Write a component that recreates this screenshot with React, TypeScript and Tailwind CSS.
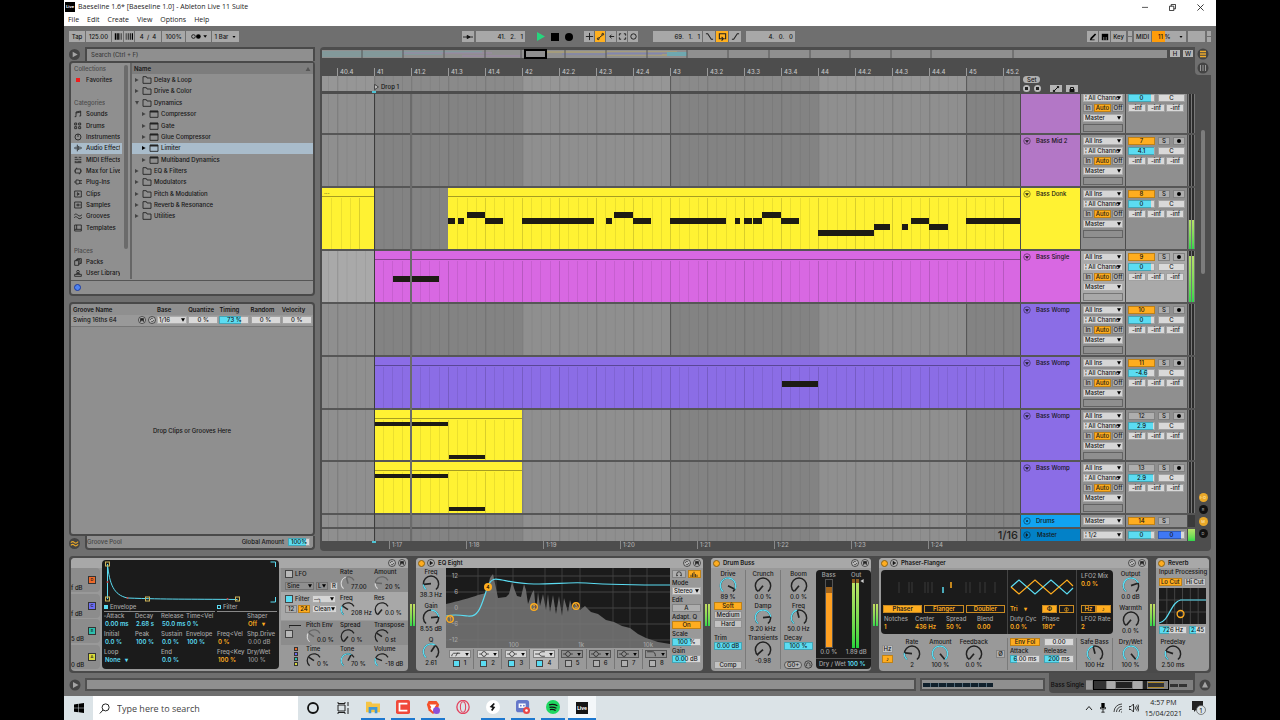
import type { ReactNode } from "react";
import clsx from "clsx";

const BAR = 37;
const LANE_W = 698;
const pct = (x: number) => `${(x / LANE_W) * 100}%`;

type Note = [x: number, w: number, y: number, h?: number];
type Clip = { x: number; w: number; color: string; label?: string; notes?: Note[] };
type Track = {
  name: string;
  num: string;
  vol: string;
  fill: number;
  height: string;
  color: string;
  on?: boolean;
  selected?: boolean;
  clipped?: boolean;
  meter?: number;
  clips?: Clip[];
};

const yellow = "bg-[#fff233]";
const womp: Clip = { x: 52, w: 148, color: yellow, notes: [[0, 74, 12, 4], [75, 36, 45, 4]] };

const tracks: Track[] = [
  { name: "", num: "6", vol: "0", fill: 85, height: "h-[41px]", color: "bg-[#b377c6]", clipped: true },
  { name: "Bass Mid 2", num: "7", vol: "4.1", fill: 96, height: "h-[53px]", color: "bg-[#b377c6]", on: true },
  {
    name: "Bass Donk", num: "8", vol: "0", fill: 85, height: "h-[63px]", color: yellow, on: true, meter: 48,
    clips: [
      { x: 0, w: 52, color: yellow, label: "..." },
      {
        x: 126, w: 572, color: yellow,
        notes: [
          [0, 7, 30], [10, 6, 30], [19, 18, 24], [37, 18, 30], [74, 72, 30], [158, 6, 30], [166, 19, 24], [185, 18, 30],
          [222, 56, 30], [287, 5, 30], [296, 8, 30], [305, 9, 30], [314, 19, 24], [333, 18, 30], [370, 56, 42],
          [426, 16, 36], [454, 6, 36], [463, 18, 30], [481, 19, 36], [518, 54, 30],
        ],
      },
    ],
  },
  {
    name: "Bass Single", num: "9", vol: "0", fill: 85, height: "h-[53px]", color: "bg-[#d868e2]", on: true, selected: true, meter: 90,
    clips: [{ x: 52, w: 646, color: "bg-[#d868e2]", notes: [[19, 46, 25]] }],
  },
  { name: "Bass Womp", num: "10", vol: "0", fill: 85, height: "h-[53px]", color: "bg-[#8b6de6]", on: true },
  {
    name: "Bass Womp", num: "11", vol: "-4.6", fill: 72, height: "h-[53px]", color: "bg-[#8b6de6]", on: true,
    clips: [{ x: 52, w: 646, color: "bg-[#8b6de6]", notes: [[408, 36, 24]] }],
  },
  { name: "Bass Womp", num: "12", vol: "2.9", fill: 94, height: "h-[52px]", color: "bg-[#8b6de6]", clips: [womp] },
  { name: "Bass Womp", num: "13", vol: "2.9", fill: 94, height: "h-[53px]", color: "bg-[#8b6de6]", clips: [womp] },
];

/* ---------- shared controls ---------- */

function Select({ label, value, className, tone = "bg-[#d6d6d6]" }: { label: string; value: string; className?: string; tone?: string }) {
  return (
    <span className={clsx("relative flex h-2 min-w-0 shrink-0", className)}>
      <select aria-label={label} className={clsx("h-2 w-full min-w-0 appearance-none overflow-hidden pl-0.5 pr-1 leading-[8px] ring-1 ring-inset ring-black/20", tone)}>
        <option>{value}</option>
      </select>
      <svg viewBox="0 0 6 5" className="pointer-events-none absolute right-0.5 top-0.5 h-1 w-1"><path d="M0 0h6L3 5z" /></svg>
    </span>
  );
}

function Num({ label, value, fill = 0, color = "#5bdcf2", base = "#d9d9d9", className }: { label: string; value: string; fill?: number; color?: string; base?: string; className?: string }) {
  return (
    <input
      aria-label={label}
      defaultValue={value}
      size={1}
      className={clsx("h-2 min-w-0 shrink-0 p-0 text-center leading-[8px] ring-1 ring-inset ring-black/25", className)}
      style={{ background: `linear-gradient(to right, ${color} ${fill}%, ${base} ${fill}%)` }}
    />
  );
}

function Btn({ children, on, label, className }: { children?: ReactNode; on?: boolean; label?: string; className?: string }) {
  return (
    <button aria-label={label} className={clsx("flex h-2 shrink-0 items-center justify-center leading-[8px] whitespace-nowrap ring-1 ring-inset ring-black/25", on ? "bg-[#ffad1f]" : "bg-[#aeaeae]", className)}>
      {children}
    </button>
  );
}

const pt = (v: number, r: number) => {
  const a = ((-140 + 280 * v) * Math.PI) / 180;
  return `${(10 + r * Math.sin(a)).toFixed(2)} ${(10 - r * Math.cos(a)).toFixed(2)}`;
};
const arc = (a: number, b: number) => `M${pt(a, 8.5)}A8.5 8.5 0 ${(b - a) * 280 > 180 ? 1 : 0} 1 ${pt(b, 8.5)}`;

function Dial({ v, from = 0, end = 1, color = "#5bdcf2", ink = "#222", className = "h-4 w-[18px]" }: { v: number; from?: number; end?: number; color?: string; ink?: string; className?: string }) {
  const lo = Math.min(v, from);
  const hi = Math.max(v, from);
  return (
    <svg viewBox="0 .5 20 17.500" fill="none" strokeWidth="1.600" className={clsx("shrink-0", className)}>
      <path d={arc(0, end)} stroke={ink} />
      {hi > lo && <path d={arc(lo, hi)} stroke={color} />}
      <path d={`M10 10L${pt(v, 8)}`} stroke={ink} strokeWidth="1.900" />
    </svg>
  );
}

function Knob({ label, value, ...dial }: { label: string; value: string; v: number; from?: number }) {
  return (
    <div className="flex h-8 shrink-0 flex-col items-center whitespace-nowrap leading-[7px]">
      <span>{label}</span>
      <Dial {...dial} />
      <span>{value}</span>
    </div>
  );
}

function SideKnob({ label, value, dim, ...dial }: { label: string; value: string; v: number; from?: number; dim?: boolean }) {
  return (
    <div className="flex w-[34px] shrink-0 flex-col whitespace-nowrap leading-[8px]">
      <span>{label}</span>
      <span className="flex items-end">
        <Dial {...dial} end={0.72} className="h-3.5 w-4" ink={dim ? "#666" : "#222"} color={dim ? "#d5d5d5" : undefined} />
        <span className="-ml-[5px] leading-[6px]">{value}</span>
      </span>
    </div>
  );
}

function RoundIcon({ children, className }: { children: ReactNode; className?: string }) {
  return (
    <svg viewBox="0 0 16 16" fill="none" stroke="#222" strokeWidth="1.400" className={clsx("size-2", className)}>
      <circle cx="8" cy="8" r="7" fill="#b8b8b8" />
      {children}
    </svg>
  );
}

const HotSwap = () => <RoundIcon><path d="M4.500 8a3.500 3.500 0 0 1 5-3M11.500 8a3.500 3.500 0 0 1-5 3" /></RoundIcon>;
const Save = () => <RoundIcon><path d="M5 5h6v6H5z" fill="#222" /><path d="M6.500 9.500h3v2h-3z" fill="#ddd" stroke="none" /></RoundIcon>;

/* ---------- window top ---------- */

function TitleBar() {
  return (
    <header className="bg-white text-[#222] font-['Open_Sans',sans-serif] font-normal">
      <div className="flex h-3.5 items-center pl-px">
        <span className="flex h-2.5 w-2.5 items-center justify-center bg-black text-[4px] font-bold text-white">Live</span>
        <h1 className="ml-[3px] text-[7px] leading-[14px]">Baeseline 1.6* [Baeseline 1.0] - Ableton Live 11 Suite</h1>
        <div className="ml-auto flex gap-[21px] pr-3">
          <button aria-label="Minimize"><svg viewBox="0 0 8 8" className="size-1.5" stroke="#222" strokeWidth="1"><path d="M0 4.500h8" /></svg></button>
          <button aria-label="Restore"><svg viewBox="0 0 8 8" className="size-[7px]" fill="none" stroke="#222" strokeWidth="1"><path d="M.5 2.500h5v5h-5zM2.500 2.500v-2h5v5h-2" /></svg></button>
          <button aria-label="Close"><svg viewBox="0 0 8 8" className="size-[7px]" stroke="#222" strokeWidth="1"><path d="M.5.5l7 7M7.500.5l-7 7" /></svg></button>
        </div>
      </div>
      <nav className="flex h-3 items-center gap-[8px] pl-1 text-[7px] leading-[12px]">
        {["File", "Edit", "Create", "View", "Options", "Help"].map((m) => <button key={m}>{m}</button>)}
      </nav>
    </header>
  );
}

const tb = "flex h-[11px] items-center justify-center bg-[#a8a8a8] whitespace-nowrap";

function Transport() {
  return (
    <div className="flex h-[21px] items-center pl-[5px] pr-[5px] text-[#151515]">
      <div className="flex w-[393px] shrink-0 gap-px">
        <button className={clsx(tb, "w-4")}>Tap</button>
        <input aria-label="Tempo" defaultValue="125.00" className={clsx(tb, "w-[25px] text-center")} />
        <button aria-label="Nudge down" className={clsx(tb, "w-[11px]")}>
          <svg viewBox="0 0 10 8" className="h-[7px] w-2"><path d="M1 0h2v8H1zM4 0h2v8H4zM7 0h.8v8H7zM9 0h.6v8H9z" /></svg>
        </button>
        <button aria-label="Nudge up" className={clsx(tb, "w-[10px]")}>
          <svg viewBox="0 0 10 8" className="h-[7px] w-2"><path d="M1 0h.8v8H1zM3.500 0h1v8h-1zM6 0h1.200v8H6zM8.500 0h1.500v8H8.500z" /></svg>
        </button>
        <span className={clsx(tb, "w-[26px]")}>4 &nbsp;/ &nbsp;4</span>
        <span className={clsx(tb, "w-[23px]")}>100%</span>
        <button aria-label="Metronome" className={clsx(tb, "w-[25px] gap-px")}>
          <svg viewBox="0 0 26 8" className="h-[5px] w-4"><circle cx="4" cy="4" r="3" fill="none" stroke="#111" strokeWidth="1.400" /><circle cx="12" cy="4" r="3.800" /><path d="M20 2h6l-3 4z" /></svg>
        </button>
        <button className={clsx(tb, "w-[27px] gap-1")}>1 Bar<svg viewBox="0 0 6 4" className="h-0.5 w-1"><path d="M0 0h6L3 4z" /></svg></button>
      </div>
      <div className="flex items-center gap-px">
        <button aria-label="Follow" className={clsx(tb, "w-3")}><svg viewBox="0 0 12 8" className="h-2 w-2.5" stroke="#111" fill="#111"><path d="M0 4h12" /><path d="M5 2v4L8.500 4z" /></svg></button>
        <span className={clsx(tb, "ml-px w-[49px] justify-end pr-0.5 whitespace-pre")}>41.   2.   1</span>
        <button aria-label="Play" className="ml-[11px]"><svg viewBox="0 0 8 9" className="h-[9px] w-2"><path d="M0 0v9l8-4.500z" fill="#26d67e" /></svg></button>
        <button aria-label="Stop" className="ml-[5px] size-2 bg-black" />
        <button aria-label="Record" className="ml-[5px] size-2 rounded-full bg-black" />
        <div className="ml-[10px] flex gap-px">
          {[
            "M5 1v8M1 5h8", "M1.500 7.500a1 1 0 1 0 2 0a1 1 0 1 0-2 0M3.500 6.500L7 3.500M6.500 2.500a1 1 0 1 0 2 0a1 1 0 1 0-2 0",
            "M8 5H3M5 3L3 5l2 2", "M1.500 4V2h2M6.500 2h2v2M8.500 6v2h-2M3.500 8h-2V6", "M2 5a3 3 0 1 0 6 0a3 3 0 1 0-6 0",
          ].map((d, i) => (
            <button key={d} aria-label={["Overdub", "Automation arm", "Re-enable automation", "Capture MIDI", "Session record"][i]} className={clsx(tb, "w-2.5", i === 1 && "!bg-[#ffb01f]")}>
              <svg viewBox="0 0 10 10" className="size-[9px]" fill="none" stroke="#222" strokeWidth="1.100"><path d={d} /></svg>
            </button>
          ))}
        </div>
        <span className={clsx(tb, "ml-[14px] w-[49px] justify-end pr-0.5 whitespace-pre")}>69.   1.   1</span>
        {["M1 2h2l4 6h2", "M5 7.500H1.500V2h7v5.500H7M4 5.500l2 2-2 2", "M1 8h2l4-6h2"].map((d, i) => (
          <button key={d} aria-label={["Punch in", "Loop", "Punch out"][i]} className={clsx(tb, "w-3", i === 1 && "!bg-[#ffb01f]")}>
            <svg viewBox="0 0 10 10" className="size-[9px]" fill="none" stroke="#222" strokeWidth="1.200"><path d={d} /></svg>
          </button>
        ))}
        <span className={clsx(tb, "ml-1 w-[49px] justify-end pr-0.5 whitespace-pre")}>4.   0.   0</span>
      </div>
      <div className="ml-auto flex gap-px">
        <button aria-label="Draw mode" className={clsx(tb, "w-[11px]")}><svg viewBox="0 0 10 10" className="size-2"><path d="M1 9h6v-1H3l6-6-1.500-1.500L2 6z" /></svg></button>
        <button aria-label="Computer MIDI keyboard" className={clsx(tb, "w-[11px]")}><svg viewBox="0 0 10 10" className="size-2"><path d="M1 1h8v8H1z" /><path d="M3.500 5v4M6.500 5v4" stroke="#bbb" strokeWidth=".8" /></svg></button>
        <button className={clsx(tb, "w-[15px]")}>Key</button>
        <span className="mx-px grid w-1 gap-px"><i className="bg-[#a8a8a8]" /><i className="bg-[#a8a8a8]" /></span>
        <button className={clsx(tb, "w-[17px]")}>MIDI</button>
        <span className="flex h-[11px] w-[34px] items-center gap-2 bg-gradient-to-r from-[#ff9c0a] from-38% to-[#a8a8a8] to-38% pl-1.5 whitespace-nowrap">11 %<svg viewBox="0 0 6 4" className="h-0.5 w-1"><path d="M0 0h6L3 4z" /></svg></span>
        <span className={clsx(tb, "ml-px w-[17px]")} />
        <span className="ml-px grid w-1 gap-px"><i className="bg-[#a8a8a8]" /><i className="bg-[#a8a8a8]" /></span>
      </div>
    </div>
  );
}

/* ---------- browser ---------- */

const side: [string, string?][] = [
  ["Collections"], ["Favorites", "fav"], [""], ["Categories"],
  ["Sounds", "M3 10V3l7-1.500V9M3 4.500l7-1.500M1 10h2M8 9h2"],
  ["Drums", "M1 1.500h3v3H1zM7 1.500h3v3H7zM1 7h3v3H1zM7 7h3v3H7z"],
  ["Instruments", "M1.500 6a4.500 4.500 0 1 0 9 0a4.500 4.500 0 1 0-9 0M6 1.500V6"],
  ["Audio Effects", "M0 6h2M3 4v4M5 1v10M7 3v6M9 4v4M10 6h2"],
  ["MIDI Effects", "M1 2h4M7 2h4M1 5h6M8 5h3M1 8h3M5 8h6M1 10h10"],
  ["Max for Live", "M2 3h8v6H2zM0 6h2M10 6h2M4 1v2M8 9v2"],
  ["Plug-Ins", "M0 6h3M3 3h3a3 3 0 0 1 0 6H3zM8 4h4M8 8h4"],
  ["Clips", "M1 1.500h10v9H1zM5 4v4l3-2z"],
  ["Samples", "M1 1.500h10v9H1zM3 6h1M5 4v4M7 4v4M9 5v2"],
  ["Grooves", "M0 5c2-3 4-2 6 0s4 1 6-1M0 9c2-3 4-2 6 0s4 1 6-1"],
  ["Templates", "M1 1.500h10v9H1zM4 1.500V8M1 8h10"],
  [""], ["Places"],
  ["Packs", "M1 4h6v7H1zM3 4V2.500h6V9H7M5 2.500V1h6v7H9"],
  ["User Library", "M4 4a2 2 0 1 0 4 0a2 2 0 1 0-4 0M1 8h10v3H1zM4 8V6.500h4V8"],
];

const files: [string, number, boolean?][] = [
  ["Delay & Loop", 0], ["Drive & Color", 0], ["Dynamics", 0, true], ["Compressor", 1], ["Gate", 1], ["Glue Compressor", 1],
  ["Limiter", 1], ["Multiband Dynamics", 1], ["EQ & Filters", 0], ["Modulators", 0], ["Pitch & Modulation", 0], ["Reverb & Resonance", 0], ["Utilities", 0],
];

function Browser() {
  return (
    <section className="flex flex-col">
      <div className="flex h-3.5">
        <button aria-label="Hide browser" className="flex w-4 items-center"><svg viewBox="0 0 12 12" className="size-[11px]"><circle cx="6" cy="6" r="6" fill="#444" /><path d="M4 3v6l5.500-3z" fill="#a5a5a5" /></svg></button>
        <input aria-label="Search" placeholder="Search (Ctrl + F)" className="min-w-0 flex-1 border-2 border-b-0 border-[#494949] bg-[#8f8f8f] pl-1 placeholder:text-[#3c3c3c]" />
      </div>
      <div className="rounded-sm border-2 border-[#494949] bg-[#8f8f8f]">
        <div className="flex h-[218px] border-b border-[#555]">
          <div className="relative grid h-[216px] w-[61px] auto-rows-fr border-r-2 border-[#666]">
            {side.map(([name, icon], i) => (
              <div key={i} className={clsx("mr-2 flex items-center gap-1 overflow-hidden whitespace-nowrap pl-[3px]", name === "Audio Effects" && "bg-[#a9bccb]", !icon && "text-[#4b4b4b]")}>
                {icon === "fav" ? <i className="mr-0.5 ml-0.5 size-1 bg-[#ef1c1c]" /> : icon && (
                  <svg viewBox="0 0 12 12" className="size-2 shrink-0" fill="none" stroke="#1c1c1c" strokeWidth="1.200"><path d={icon} /></svg>
                )}
                <span className={clsx("overflow-hidden", icon && "w-[34px]")}>{name}</span>
              </div>
            ))}
            <i className="absolute right-0.5 top-0.5 h-[184px] w-1 rounded-full bg-[#6b6b6b]" />
          </div>
          <div className="grid h-[216px] flex-1 [grid-template-rows:repeat(19,minmax(0,1fr))]">
            <div className="flex items-center justify-between bg-[#7d7d7d] px-0.5 font-semibold">Name<svg viewBox="0 0 6 5" className="h-1 w-1.5"><path d="M0 5h6L3 0z" fill="#555" /></svg></div>
            {files.map(([name, depth, open]) => (
              <div key={name} className={clsx("flex items-center", depth ? "pl-2.5" : "pl-[3px]", name === "Limiter" && "bg-[#a9bccb]")}>
                <svg viewBox="0 0 6 6" className={clsx("mr-[3px] size-1", open && "rotate-90")}><path d="M0 0v6l5.500-3z" fill={name === "Limiter" ? "#000" : "#444"} /></svg>
                <svg viewBox="0 0 14 12" className="mr-[2px] h-2 w-2.5" fill="none" stroke="#222" strokeWidth="1.300">
                  {depth ? <><path d="M1 1.500h12v9.500H1z" /><path d="M1 2.500h12" strokeWidth="2.500" /></> : <path d="M1 11V1h5l1 2h6v8z" />}
                </svg>
                {name}
              </div>
            ))}
          </div>
        </div>
        <div className="flex h-[13px] items-center pl-[3px]"><i className="size-[7px] rounded-full border border-[#1c3aa0] bg-[#4f83f0]" /></div>
      </div>
    </section>
  );
}

function Grooves() {
  return (
    <section className="mt-[6px] flex flex-1 flex-col pb-px">
      <div className="flex-1 rounded-sm border-2 border-[#494949] bg-[#8f8f8f] text-[#151515]">
        <table className="w-full table-fixed text-left">
          <thead>
            <tr className="h-[11px]">
              <th className="w-[86px] pl-0.5 font-semibold">Groove Name</th>
              {["Base", "Quantize", "Timing", "Random", "Velocity"].map((h) => <th key={h} className="font-semibold">{h}</th>)}
            </tr>
          </thead>
          <tbody>
            <tr className="h-[11px] border-b border-[#777] bg-[#999]">
              <td className="pl-0.5"><span className="flex items-center">Swing 16ths 64<span className="ml-auto flex gap-0.5 pr-px"><Save /><HotSwap /></span></span></td>
              <td><Select label="Base" value="1/16" className="mr-px" /></td>
              {[["Quantize", "0 %", 0], ["Timing", "73 %", 73], ["Random", "0 %", 0], ["Velocity", "0 %", 0]].map(([l, v, f]) => (
                <td key={l as string}><Num label={l as string} value={v as string} fill={f as number} className="block w-[30px]" /></td>
              ))}
            </tr>
          </tbody>
        </table>
        <p className="pt-[100px] text-center">Drop Clips or Grooves Here</p>
      </div>
      <div className="flex h-3.5 items-center">
        <svg viewBox="0 0 12 12" className="mr-[5px] size-[11px]"><circle cx="6" cy="6" r="6" fill="#444" /><path d="M2 5c2-2 3-1 4 0s3 0 4-1M2 8c2-2 3-1 4 0s3 0 4-1" stroke="#e9a829" fill="none" strokeWidth="1.200" /></svg>
        <div className="flex h-full flex-1 items-center rounded-b-sm border-2 border-t-0 border-[#494949] bg-[#8f8f8f] pr-[3px]">
          <span className="text-[#444]">Groove Pool</span>
          <span className="ml-auto mr-1">Global Amount</span>
          <Num label="Global Amount" value="100%" fill={83} className="w-[22px]" />
        </div>
      </div>
    </section>
  );
}

/* ---------- arrangement ---------- */

function Grid() {
  return (
    <svg viewBox="0 0 698 10" preserveAspectRatio="none" className="absolute inset-0 h-full w-full">
      {[52, 348, 644].map((x) => <rect key={x} x={x} width={Math.min(148, 698 - x)} height="10" fill="#000" opacity=".08" />)}
      {Array.from({ length: 75 }, (_, i) => (
        <rect key={i} x={6 + i * 9.25} width="1" height="10" fill="#000" opacity={(i + 3) % 4 === 0 ? 0.14 : 0.06} />
      ))}
      {[348, 644].map((x) => <rect key={x} x={x} width="1" height="10" fill="#000" opacity=".25" />)}
    </svg>
  );
}

function Lane({ clips = [], selected }: { clips?: Clip[]; selected?: boolean }) {
  return (
    <div className={clsx("relative overflow-hidden", selected ? "bg-[#a9a9a9]" : "bg-[#8f8f8f]")}>
      <Grid />
      {clips.map((c) => (
        <div key={c.x} className={clsx("absolute inset-y-0", c.color)} style={{ left: pct(c.x), width: pct(c.w) }}>
          <div className="h-[9px] border-b border-black/35 pl-0.5 leading-[8px]">{c.label}</div>
          {Array.from({ length: Math.floor(c.w / 9.25) - 1 }, (_, i) => (
            <i key={i} className={clsx("absolute bottom-0 top-2.5 w-px", i % 4 === 3 ? "bg-black/15" : "bg-black/8")} style={{ left: `${(((i + 1) * 9.25) / c.w) * 100}%` }} />
          ))}
          {c.notes?.map(([x, w, y, h = 6]) => (
            <i key={x} className="absolute bg-[#1d1b14]" style={{ left: `${(x / c.w) * 100}%`, width: `${(w / c.w) * 100}%`, top: y, height: h }} />
          ))}
        </div>
      ))}
    </div>
  );
}

const row = "grid grid-cols-[minmax(0,1fr)_59px_44px_61px_7px] gap-x-px border-b-2 border-[#565656]";

function Fold({ d = "M5 7h6l-3 4z" }: { d?: string }) {
  return <svg viewBox="0 0 16 16" className="size-2 shrink-0" fill="none" stroke="#000" strokeOpacity=".65" strokeWidth="1.300"><circle cx="8" cy="8" r="6.500" /><path d={d} fill="#222" /></svg>;
}

function TrackRow({ t }: { t: Track }) {
  const bg = t.selected ? "bg-[#a9a9a9]" : "bg-[#8f8f8f]";
  const col = clsx("flex flex-col gap-0.5 overflow-hidden px-0.5", bg);
  return (
    <div className={clsx(row, t.height)}>
      <Lane clips={t.clips} selected={t.selected} />
      <div className={clsx("flex gap-[5px] pl-0.5 pt-0.5 leading-[8px]", t.color)}>
        {t.name && <><Fold />{t.name}</>}
      </div>
      <div className={clsx(col, t.clipped ? "pt-0" : "pt-0.5")}>
        {!t.clipped && <Select label="Input type" value="All Ins" />}
        <Select label="Input channel" value="¦ All Channels" />
        <div className="flex gap-px">
          <Btn className="w-[10px]">In</Btn><Btn on className="w-[17px]">Auto</Btn><Btn className="w-3">Off</Btn>
        </div>
        <Select label="Output" value="Master" />
        <div className="h-2 shrink-0 ring-1 ring-inset ring-black/30" />
      </div>
      <div className={clsx(col, t.clipped ? "pt-0" : "pt-0.5")}>
        {!t.clipped && (
          <div className="flex gap-[3px]"><Btn on={t.on} className="w-[27px]">{t.num}</Btn><Btn className="w-3">S</Btn><Btn className="w-3" label="Arm"><i className="size-1 rounded-full bg-black" /></Btn></div>
        )}
        <div className="flex gap-[3px]"><Num label="Volume" value={t.vol} fill={t.fill} className="w-[27px]" /><Num label="Pan" value="C" className="w-[27px]" /></div>
        <div className="flex gap-px">{[1, 2, 3].map((n) => <Num key={n} label={`Send ${n}`} value="-inf" className="w-[18px]" />)}</div>
      </div>
      <div className="flex items-end justify-center gap-px bg-[#777] px-px">
        {[0, 1].map((n) => (
          <div key={n} className="flex h-full flex-1 items-end bg-[#2c2c2c]">
            <i className="w-full bg-gradient-to-t from-[#2bd84b] to-[#b5e06a]" style={{ height: `${t.meter ?? 0}%` }} />
          </div>
        ))}
      </div>
    </div>
  );
}

function Arrangement() {
  const beats = ["40.4", "41", "41.2", "41.3", "41.4", "42", "42.2", "42.3", "42.4", "43", "43.2", "43.3", "43.4", "44", "44.2", "44.3", "44.4", "45", "45.2"];
  return (
    <section className="flex min-w-0 flex-1 flex-col rounded-sm bg-[#4d4d4d] pl-0.5">
      <div className="flex h-[18px] items-start pt-[3px]">
        <div className="relative h-2 w-[845px] max-w-full min-w-0 shrink bg-[#8f8f8f]">
          <svg viewBox="0 0 845 8" preserveAspectRatio="none" className="h-full w-full">
            <path d="M0 2h160M0 4h120M0 6h80" stroke="#76a3a6" /><path d="M80 3h90M140 6h60" stroke="#9c86a8" />
            <path d="M225 2h130M285 5h60" stroke="#b9a96a" /><path d="M240 4h100M285 3h70" stroke="#7f83b8" /><path d="M345 2h20v4h-20" fill="#6fa8b0" />
            {[40, 81, 122, 163, 199, 243, 284, 325, 365, 406, 447, 488, 528, 569, 609, 691].map((x) => <path key={x} d={`M${x} 0v8`} stroke="#555" />)}
          </svg>
          <i className="absolute -inset-y-px left-[202px] w-[23px] border border-black ring-1 ring-inset ring-black" />
        </div>
        <button className="ml-[3px] h-[7px] w-2.5 bg-[#b5b5b5] leading-[7px]">H</button>
        <button className="ml-[3px] h-[7px] w-2.5 bg-[#b5b5b5] leading-[7px]">W</button>
        <div className="-mt-[3px] ml-auto flex h-7 w-4 shrink-0 flex-col items-center gap-0.5 rounded-bl-sm bg-[#6f6f6f] pt-px">
          <svg viewBox="0 0 12 12" className="size-3"><circle cx="6" cy="6" r="5.500" fill="#444" /><path d="M3 3.500h6M3 6h6M3 8.500h6" stroke="#f0ac2b" strokeWidth="1.400" /></svg>
          <svg viewBox="0 0 12 12" className="size-3"><circle cx="6" cy="6" r="5.500" fill="#444" /><path d="M3.500 3v6M6 3v6M8.500 3v6" stroke="#999" strokeWidth="1" /></svg>
        </div>
      </div>
      <div className="flex">
        <div className="min-w-0 flex-1">
          <div className="grid grid-cols-[minmax(0,1fr)_172px] gap-x-[3px]">
            <div>
              <div className="relative h-[11px] overflow-hidden text-[#c4c4c4]">
                {beats.map((b, i) => (
                  <span key={b} className="absolute top-[3px] border-l border-[#999] pl-0.5 leading-[8px]" style={{ left: pct(15 + i * BAR) }}>{b}</span>
                ))}
              </div>
              <div className="relative h-[15px] bg-[#969696]">
                <Grid />
                <span className="absolute left-[52px] top-[7px] flex items-center gap-0.5 leading-[8px]"><svg viewBox="0 0 6 8" className="h-1.5 w-[5px]"><path d="M.5.5v7L5.500 4z" fill="#ccc" stroke="#222" /></svg>Drop 1</span>
              </div>
              <div className="h-[3px]"><i className="ml-[50px] block h-0.5 w-1 bg-[#4fc3d4]" /></div>
            </div>
            <div className="flex flex-col items-start pt-[11px]">
              <button className="h-[7px] rounded-full bg-[#b0b0b0] px-1 leading-[7px]">Set</button>
              <div className="mt-0.5 flex items-center">
                <button aria-label="Previous locator" className="mr-1 flex size-[7px] items-center justify-center rounded-full bg-[#bbb]"><i className="size-[3px] bg-[#222]" /></button>
                <button aria-label="Next locator" className="mr-[9px] flex size-[7px] items-center justify-center rounded-full bg-[#bbb]"><i className="size-[3px] bg-[#222]" /></button>
                <button aria-label="Automation mode" className="mr-1 flex h-[7px] w-3 items-center justify-center bg-[#b5b5b5]"><svg viewBox="0 0 8 6" className="h-1.5 w-2" stroke="#111" fill="#111"><path d="M2 5l4-4" /><circle cx="2" cy="5" r=".8" /><circle cx="6" cy="1" r=".8" /></svg></button>
                <button aria-label="Lock envelopes" className="flex h-[7px] w-3 items-center justify-center bg-[#b5b5b5]"><svg viewBox="0 0 8 6" className="h-1.5 w-2" fill="#111"><path d="M1.500 3h5v3h-5z" /><path d="M2.500 3V1.500h3V3" stroke="#111" fill="none" /></svg></button>
              </div>
            </div>
          </div>
          <div className="relative">
            {tracks.map((t) => <TrackRow key={t.num} t={t} />)}
            <div className={clsx(row, "h-3.5")}>
              <Lane />
              <div className="flex items-center gap-[5px] bg-[#11a4f2] pl-0.5"><Fold d="M5 5l4 4M9 6v3H6" />Drums</div>
              <div className="flex items-center bg-[#8f8f8f] px-0.5"><Select label="Drums output" value="Master" className="flex-1" /></div>
              <div className="flex items-center gap-[3px] bg-[#8f8f8f] px-0.5"><Btn on className="w-[27px]">14</Btn><Btn className="w-3">S</Btn></div>
              <div className="bg-[#3a3a3a]" />
            </div>
            <div className={clsx(row, "h-3 !border-b-0")}>
              <Lane />
              <div className="flex items-center gap-[6px] bg-[#0381c7] pl-0.5"><Fold d="M6 5v6l4-3z" />Master</div>
              <div className="flex items-center bg-[#8f8f8f] px-0.5"><Select label="Cue output" value="¦ 1/2" className="flex-1" /></div>
              <div className="flex items-center gap-[3px] bg-[#8f8f8f] px-0.5"><Num label="Master volume" value="0" fill={85} className="w-[27px]" /><Num label="Cue volume" value="0" fill={85} color="#3f78f5" className="w-[27px]" /></div>
              <div className="bg-gradient-to-t from-[#2bd84b] to-[#b5e06a]" />
            </div>
            <div className="pointer-events-none absolute inset-y-0 left-0 right-[175px]">
              <i className="absolute inset-y-0 w-px bg-[#3c3c3c]" style={{ left: pct(52) }} />
              <i className="absolute inset-y-0 w-0.5 bg-[#6b6b6b]" style={{ left: pct(88) }} />
              <span className="absolute bottom-0 right-0.5 text-[11px] leading-[12px] text-[#222]">1/16</span>
            </div>
          </div>
          <div className="relative mr-[175px] h-[9px] text-[#b0b0b0]">
            <i className="absolute h-0.5 w-1 bg-[#4fc3d4]" style={{ left: pct(50) }} />
            {[17, 18, 19, 20, 21, 22, 23, 24].map((s, i) => (
              <span key={s} className="absolute top-0 border-l border-[#888] pl-0.5 leading-[8px]" style={{ left: pct(67 + i * 77) }}>1:{s}</span>
            ))}
          </div>
        </div>
        <div className="flex w-4 flex-col items-center pb-3 pt-[65px]">
          <i className="h-[144px] w-1 rounded-full bg-[#7c7c7c]" />
          <div className="mt-auto flex flex-col gap-[3px]">
            {["I-O", "R", "M", "D"].map((b, i) => (
              <button key={b} className={clsx("size-[9px] rounded-full text-[4px] leading-[9px]", i % 2 ? "bg-[#111] text-[#999]" : "bg-[#e9a829] text-[#fbe3ae]")}>{b}</button>
            ))}
          </div>
        </div>
      </div>
    </section>
  );
}

/* ---------- devices ---------- */

function Device({ title, play, plain, icons = true, className, children }: { title?: string; play?: boolean; plain?: boolean; icons?: boolean; className: string; children: ReactNode }) {
  return (
    <article className={clsx("flex flex-col overflow-hidden rounded-sm bg-[#999]", className)}>
      <header className="flex h-[10px] shrink-0 items-center gap-0.5 bg-[#a8a8a8] px-0.5 font-semibold">
        {!plain && <i className="size-[7px] rounded-full border border-[#8a6212] bg-[#ffad1f]" />}
        {play && <RoundIcon><path d="M6 4.500v7L11.500 8z" fill="#111" /></RoundIcon>}
        {title && <h2 className="pl-px">{title}</h2>}
        {icons && <span className="ml-auto flex gap-0.5"><HotSwap /><Save /></span>}
      </header>
      {children}
    </article>
  );
}

function Level() {
  return (
    <div className="flex w-2 shrink-0 justify-center gap-px pt-[46px]">
      {[0, 1].map((n) => <i key={n} className="h-[22px] w-0.5 bg-gradient-to-t from-[#2bd84b] to-[#c3dd62]" />)}
    </div>
  );
}

function Check({ label, on, text }: { label: string; on?: boolean; text?: boolean }) {
  return (
    <label className="flex items-center gap-0.5">
      <input type="checkbox" aria-label={label} defaultChecked={on} className="size-2 shrink-0 appearance-none border border-[#444] bg-[#b8b8b8] checked:bg-[#5bdcf2]" />
      {text && label}
    </label>
  );
}

const env: [string, string][][] = [
  [["▫Attack", "0.00 ms"], ["Decay", "2.68 s"], ["Release", "50.0 ms"], ["Time<Vel", "0 %"], ["", ""], ["Shaper", "Off   ▾"]],
  [["Initial", "0.0 %"], ["Peak", "100 %"], ["Sustain", "0.0 %"], ["Envelope", "100 %"], ["Freq<Vel", "0 %"], ["Shp.Drive", "0.00 dB"]],
  [["Loop", "None   ▾"], ["", ""], ["End", "0.0 %"], ["", ""], ["Freq<Key", "100 %"], ["Dry/Wet", "100 %"]],
];

function Operator() {
  return (
    <Device plain className="w-[337px] shrink-0">
      <div className="flex flex-1">
        <div className="flex w-[29px] shrink-0 flex-col justify-between pb-0.5">
          {[["D", "bg-[#ee6a2a]", "f dB"], ["C", "bg-[#6c6cf0]", "f dB"], ["B", "bg-[#2ebfae]", "5 dB"], ["A", "bg-[#d9d93a]", "0 dB"]].map(([l, c, db]) => (
            <div key={l} className="flex h-6 items-end rounded-r-sm bg-[#8c8c8c]">
              <span>{db}</span>
              <button className={clsx("mb-2 ml-auto mr-1 size-2 border border-[#333] text-[4px] leading-[6px]", c)}>{l}</button>
            </div>
          ))}
        </div>
        <div className="-mt-2 mb-0.5 ml-0.5 flex w-[177px] shrink-0 flex-col rounded-sm bg-[#1b1b1b] px-0.5 text-[#a5a5a5]">
          <svg viewBox="0 0 172 43" fill="none" stroke="#5bdcf2" className="h-[43px] shrink-0">
            <path d="M3 39V4c2 20 6 31 20 34 40 1.500 60 1 110 1.500" />
            <path d="M166 2h5v5M166 42h5v-5" />
            {[[1, 2], [1, 37], [41, 37], [131, 37]].map(([x, y]) => <rect key={`${x}-${y}`} x={x} y={y} width="4" height="4" stroke="#cdb45a" />)}
            {[[3, 22], [23, 38], [123, 39]].map(([x, y]) => <circle key={x} cx={x} cy={y} r="1" stroke="none" fill="#c04a4a" />)}
          </svg>
          <div className="flex gap-0.5 leading-[8px]">
            <span className="flex w-[111px] items-center gap-0.5 border-b border-[#888]"><i className="size-1 bg-[#5bdcf2]" />Envelope</span>
            <span className="flex flex-1 items-center gap-0.5 border-b border-[#888]"><i className="size-1 border border-[#5bdcf2]" />Filter</span>
          </div>
          {env.map((r, i) => (
            <div key={i} className="grid h-[18px] shrink-0 grid-cols-[31px_26px_25px_31px_30px_30px] whitespace-pre leading-[8px]">
              {r.map(([l, v], j) => (
                <div key={j}><div>{l}</div><div className={clsx("pl-px", j < 4 ? "font-semibold text-[#5bdcf2]" : j === 4 || i === 0 ? "font-semibold text-[#ffad1f]" : "text-[#999]")}>{v}</div></div>
              ))}
            </div>
          ))}
        </div>
        <div className="flex min-w-0 flex-1 flex-col justify-between pb-0.5 pl-0.5">
          <div className="flex h-6 bg-[#8c8c8c] pl-1">
            <div className="flex w-[55px] shrink-0 flex-col justify-between py-0.5"><Check label="LFO" text /><div className="flex gap-0.5"><Select label="LFO wave" value="Sine" tone="bg-[#8f8f8f]" className="w-[29px]" /><Select label="LFO range" value="L" tone="bg-[#8f8f8f]" className="w-3" /><Btn className="w-2 !bg-[#ccc]">R</Btn></div></div>
            <SideKnob label="Rate" value="77.00" v={0.45} dim /><SideKnob label="Amount" value="20 %" v={0.2} dim />
          </div>
          <div className="flex h-7 bg-[#a8a8a8] pl-1 pt-0.5">
            <div className="flex w-[55px] shrink-0 flex-col gap-0.5 pt-px">
              <div className="flex justify-between pr-1"><Check label="Filter" on text /><Select label="Filter shape" value="─╮" className="w-6" /></div>
              <div className="flex gap-px"><Btn className="w-3">12</Btn><Btn on className="mr-px w-3">24</Btn><Select label="Circuit" value="Clean" className="w-[25px]" /></div>
            </div>
            <SideKnob label="Freq" value="208 Hz" v={0.3} /><SideKnob label="Res" value="0.0 %" v={0} />
          </div>
          <div className="flex h-6 bg-[#8c8c8c] pl-1">
            <div className="flex w-[21px] shrink-0 flex-col gap-0.5 pt-1"><svg viewBox="0 0 12 3" className="ml-1 h-[3px] w-3" fill="none" stroke="#222"><path d="M0 3V.5h12" /></svg><Check label="Pitch envelope" /></div>
            <SideKnob label="Pitch Env" value="0.0 %" v={0.3} dim /><SideKnob label="Spread" value="0 %" v={0} /><SideKnob label="Transpose" value="0 st" v={0.3} from={0.3} />
          </div>
          <div className="flex h-6 pl-1">
            <div className="flex w-[21px] shrink-0 flex-col items-center gap-px pt-0.5">{["bg-[#ee6a2a]", "bg-[#6c6cf0]", "bg-[#2ebfae]", "bg-[#d9d93a]"].map((c) => <i key={c} className={clsx("size-1 border border-[#333]", c)} />)}</div>
            <SideKnob label="Time" value="0 %" v={0.3} from={0.3} /><SideKnob label="Tone" value="70 %" v={0.6} /><SideKnob label="Volume" value="-18 dB" v={0.25} />
          </div>
        </div>
      </div>
    </Device>
  );
}

const spectrum =
  "M0 36C12 33 24 30 32 27L40 25L44 10L47 6L50 20L52 30L60 29L63 26L66 14L68 20L71 28L75 29L78 16L80 22L82 36L86 25L88 22L90 44L92 24L94 38L97 26L100 42L102 26L104 44L107 27L110 46L113 28L116 48L118 30L122 44L124 32L127 42L129 34L134 42L139 38L145 44L152 46L160 52L168 54L176 58L184 60L192 66L200 70L212 74L224 76V80H0z";

const bell = "M0 4h3l2-3h3l2 3-2 3H5L3 4M10 4h3";
const bands = ["M1 7V5q2-3 5-2h6M6 7l3-5", bell, bell, "M0 4h5q2-3 4-3h4M5 4q2 3 4 3h4", bell, bell, bell, "M0 1h7q4 0 4 6"];

function EqEight() {
  return (
    <Device title="EQ Eight" play className="w-[287px] shrink-0">
      <div className="flex flex-1 pb-0.5">
        <div className="flex w-[30px] shrink-0 flex-col gap-0.5">
          <Knob label="Freq" value="38.3 Hz" v={0.16} />
          <Knob label="Gain" value="8.55 dB" v={0.8} from={0.5} />
          <Knob label="Q" value="2.61" v={0.62} />
        </div>
        <div className="flex w-[224px] shrink-0 flex-col">
          <svg viewBox="0 0 224 80" className="h-[80px] w-[224px] bg-[#1b1b1b]">
            {[32, 50, 67, 99, 116, 134, 167, 184, 201].map((x) => <path key={x} d={`M${x} 0v80`} stroke="#3c3c3c" />)}
            {[8, 24, 40, 56, 72].map((y) => <path key={y} d={`M0 ${y}h224`} stroke="#454545" />)}
            <path d={spectrum} fill="#777" fillOpacity=".85" />
            <g fill="#a5a5a5" fontSize="6" textAnchor="end">
              <text x="12" y="10">12</text><text x="12" y="26">6</text><text x="12" y="42">0</text><text x="12" y="58">-6</text><text x="12" y="74">-12</text>
              <text x="73" y="79">100</text><text x="138" y="79">1k</text><text x="207" y="79">10k</text>
            </g>
            <path d="M0 48C8 46 14 47 22 48C34 50 36 34 42 18C46 9 50 11 56 12C66 14 74 16 88 16C110 16 124 14 140 15C170 17 190 17 224 17" fill="none" stroke="#5bdcf2" strokeWidth="1.200" />
            <circle cx="42" cy="19" r="4" fill="#ffad1f" />
            {[[4, 51], [88, 39], [130, 38]].map(([x, y]) => <circle key={x} cx={x} cy={y} r="3.300" fill="none" stroke="#ffad1f" strokeWidth="1.400" />)}
            <g fontSize="5" textAnchor="middle"><text x="42" y="21">4</text><g fill="#ffad1f"><text x="4" y="53">1</text><text x="88" y="41">2</text><text x="130" y="40">3</text></g></g>
          </svg>
          <div className="mt-px grid flex-1 grid-cols-8 gap-x-px bg-[#777]">
            {bands.map((d, i) => (
              <div key={i} className={clsx("flex flex-col items-center gap-px pt-px", i === 3 ? "bg-[#b5b5b5]" : "bg-[#999]")}>
                <button aria-label={`Band ${i + 1} type`} className={clsx("flex h-2 w-[22px] items-center justify-between px-0.5 ring-1 ring-inset ring-black/40", i < 4 ? "bg-[#d6d6d6]" : "bg-[#8f8f8f]")}>
                  <svg viewBox="0 0 13 8" className="h-1.5 w-2.5" fill="none" stroke="#222"><path d={d} /></svg>
                  <svg viewBox="0 0 6 5" className="h-[3px] w-1"><path d="M0 0h6L3 5z" /></svg>
                </button>
                <label className="flex items-center gap-1"><input type="checkbox" defaultChecked={i < 4} className="size-[7px] appearance-none border border-[#444] bg-[#b0b0b0] checked:bg-[#5bdcf2]" />{i + 1}</label>
              </div>
            ))}
          </div>
        </div>
        <div className="flex min-w-0 flex-1 flex-col pl-0.5 pr-0.5 pt-0.5 leading-[8px]">
          <div className="mb-px flex gap-0.5">
            <Btn className="flex-1" label="Audition"><svg viewBox="0 0 8 8" className="size-1.5" fill="none" stroke="#222"><path d="M1 7V4a3 3 0 0 1 6 0v3M1 6h1.500M7 6H5.500" /></svg></Btn>
            <Btn on className="flex-1" label="Analyze"><svg viewBox="0 0 10 8" className="h-1.5 w-2" stroke="#222"><path d="M1 8V5M3 8V3M5 8V1M7 8V4M9 8V5" /></svg></Btn>
          </div>
          <span>Mode</span><Select label="Mode" value="Stereo" className="mb-px" />
          <span>Edit</span><Btn className="mb-px">A</Btn>
          <span className="whitespace-nowrap">Adapt. Q</span><Btn on className="mb-px">On</Btn>
          <span>Scale</span><Num label="Scale" value="100 %" fill={65} className="mb-px" />
          <span>Gain</span><Num label="Gain" value="0.00 dB" fill={50} />
        </div>
      </div>
    </Device>
  );
}

function DrumBuss() {
  return (
    <Device title="Drum Buss" className="w-[160px] shrink-0">
      <div className="flex flex-1 pb-0.5 pt-0.5">
        <div className="flex w-[34px] shrink-0 flex-col items-stretch px-[3px]">
          <Knob label="Drive" value="89 %" v={0.92} />
          <div className="flex h-8 flex-col gap-px"><Btn on>Soft</Btn><Btn className="!bg-[#c2c2c2]">Medium</Btn><Btn className="!bg-[#c2c2c2]">Hard</Btn></div>
          <span className="leading-[8px]">Trim</span>
          <Num label="Trim" value="0.00 dB" fill={100} />
          <Btn className="mt-auto !bg-[#c2c2c2]">Comp</Btn>
        </div>
        <div className="w-[36px] shrink-0 border-x border-[#7a7a7a]">
          <Knob label="Crunch" value="0.0 %" v={0} /><Knob label="Damp" value="9.20 kHz" v={0.8} /><Knob label="Transients" value="-0.98" v={0.03} from={0.03} />
        </div>
        <div className="flex w-[35px] shrink-0 flex-col px-[3px]">
          <Knob label="Boom" value="0.0 %" v={0} /><Knob label="Freq" value="50.0 Hz" v={0.45} />
          <span className="leading-[8px]">Decay</span>
          <Num label="Decay" value="100 %" fill={100} />
          <div className="mt-auto flex items-center gap-0.5"><button className="h-2 rounded-full border border-[#555] bg-[#b5b5b5] px-0.5 leading-[6px]">G0+</button><svg viewBox="0 0 10 10" className="size-[9px]" fill="none" stroke="#333"><circle cx="5" cy="5" r="4.300" /><path d="M3 7V5a2 2 0 0 1 4 0v2" /></svg></div>
        </div>
        <div className="flex flex-1 flex-col rounded-sm bg-[#1b1b1b] text-[#a5a5a5]">
          <div className="flex flex-1 justify-around pt-px leading-[8px]">
            <div className="flex flex-col items-center">
              <span>Bass</span>
              <div className="flex w-2 flex-1 flex-col border border-[#555]"><i className="h-[7px]" /><i className="h-[6px] bg-[#a4651a]" /><i className="flex-1 bg-[#ffa022]" /></div>
              <span>0.0 %</span>
            </div>
            <div className="flex flex-col items-center">
              <span>Out</span>
              <div className="flex flex-1 gap-px">{[0, 1].map((n) => <i key={n} className="w-[3px] border-t-4 border-[#8a5a1e] bg-gradient-to-t from-[#1fd43b] to-[#b8e265]" />)}<svg viewBox="0 0 4 5" className="-mr-1 size-1"><path d="M4 0v5L0 2.500z" fill="#ccc" /></svg></div>
              <span>1.89 dB</span>
            </div>
          </div>
          <div className="mt-0.5 whitespace-nowrap border-t border-[#555] pl-[3px] leading-[10px]">Dry / Wet <b className="font-semibold text-[#5bdcf2]">100 %</b></div>
        </div>
      </div>
    </Device>
  );
}

const orange = "font-semibold text-[#ffad1f]";

function Field({ label, value }: { label: string; value: string }) {
  return <div className="flex flex-col whitespace-nowrap leading-[8px]"><span>{label}</span><span className={orange}>{value}</span></div>;
}

function Tab({ children, on, className, label }: { children: ReactNode; on?: boolean; className?: string; label?: string }) {
  return <button aria-label={label} className={clsx("flex h-2 items-center justify-center border border-[#c98a22] font-semibold leading-[6px]", on ? "bg-[#ffad1f] text-[#222]" : "text-[#ffad1f]", className)}>{children}</button>;
}

function Phaser() {
  return (
    <Device title="Phaser-Flanger" play className="w-[269px] shrink-0">
      <div className="flex flex-1 pb-0.5 pl-0.5 pt-0.5">
        <div className="flex w-[232px] shrink-0 flex-col">
          <div className="flex h-16 rounded-sm bg-[#1b1b1b] text-[#a5a5a5]">
            <div className="flex w-[126px] flex-col px-0.5">
              <svg viewBox="0 0 122 35" className="h-[35px]">
                {[16, 26, 29, 42, 45, 49, 83, 87, 97, 102, 112].map((x) => <path key={x} d={`M${x} 12v11`} stroke="#3a3a3a" />)}
                <path d="M60 17v6" stroke="#5bdcf2" strokeWidth="1.500" /><path d="M68 12v6" stroke="#ffad1f" strokeWidth="1.500" />
              </svg>
              <div className="flex gap-0.5"><Tab on className="flex-1">Phaser</Tab><Tab className="flex-1">Flanger</Tab><Tab className="flex-1">Doubler</Tab></div>
              <div className="mt-0.5 grid grid-cols-[31px_31px_31px_28px] pl-px"><Field label="Notches" value="1" /><Field label="Center" value="436 Hz" /><Field label="Spread" value="50 %" /><Field label="Blend" value="0.00" /></div>
            </div>
            <div className="flex w-[70px] flex-col border-x border-[#444] px-0.5">
              <svg viewBox="0 0 64 35" className="h-[35px]" fill="none" strokeWidth="1.200">
                <path d="M1 17l8-7 16 14 16-14 16 14 6-6" stroke="#5bdcf2" /><path d="M1 17l8 7 16-14 16 14 16-14 6 6" stroke="#ffad1f" />
              </svg>
              <div className="flex">
                <span className={clsx("w-8 whitespace-nowrap", orange)}>Tri &nbsp; &nbsp;▾</span>
                <Tab on label="Phase" className="mr-0.5 flex-1">Φ</Tab>
                <Tab label="Spin" className="flex-1"><svg viewBox="0 0 8 8" className="size-[5px]" fill="none" stroke="#ffad1f"><circle cx="4" cy="4" r="3" /><path d="M4 1v6" /></svg></Tab>
              </div>
              <div className="mt-0.5 grid grid-cols-2"><Field label="Duty Cyc" value="0.0 %" /><Field label="Phase" value="180°" /></div>
            </div>
            <div className="flex flex-1 flex-col px-1">
              <div className="h-[35px] pt-0.5"><Field label="LFO2 Mix" value="0.0 %" /></div>
              <div className="flex"><Tab className="flex-1">Hz</Tab><Tab on className="flex-1">♪</Tab></div>
              <div className="mt-0.5"><Field label="LFO2 Rate" value="2" /></div>
            </div>
          </div>
          <div className="mt-1 flex">
            <div className="mt-[7px] flex w-3 shrink-0 flex-col gap-0.5 pl-px"><Btn className="!bg-[#c2c2c2]">Hz</Btn><Btn on>♪</Btn></div>
            <div className="flex flex-1 items-center justify-between pl-2.5 pr-0.5"><Knob label="Rate" value="2" v={0.2} /><Knob label="Amount" value="100 %" v={1} /><Knob label="Feedback" value="0.0 %" v={0} /><Btn className="w-[9px]">Ø</Btn></div>
            <div className="grid w-[70px] shrink-0 grid-cols-2 content-start gap-x-1 border-x border-[#7a7a7a] px-0.5 leading-[8px]">
              <Btn on>Env Fol</Btn><Num label="Envelope amount" value="0.00" />
              <span className="mt-px">Attack</span><span className="mt-px">Release</span>
              <Num label="Attack" value="6.00 ms" fill={22} /><Num label="Release" value="200 ms" fill={50} />
            </div>
            <div className="w-9 shrink-0 border-r border-[#7a7a7a]"><Knob label="Safe Bass" value="100 Hz" v={0.45} /></div>
          </div>
        </div>
        <div className="flex flex-1 flex-col justify-between"><Knob label="Output" value="0.0 dB" v={0.75} /><Knob label="Warmth" value="0.0 %" v={0} /><Knob label="Dry/Wet" value="100 %" v={1} /></div>
      </div>
    </Device>
  );
}

function Reverb() {
  return (
    <Device title="Reverb" icons={false} className="min-w-0 flex-1">
      <div className="flex flex-col gap-0.5 px-[3px]">
        <span className="whitespace-nowrap leading-[8px]">Input Processing</span>
        <div className="flex gap-0.5"><Btn on className="flex-1">Lo Cut</Btn><Btn className="flex-1 !bg-[#c2c2c2]">Hi Cut</Btn></div>
        <svg viewBox="0 0 48 36" preserveAspectRatio="none" className="h-9 w-full bg-[#1b1b1b]" fill="none">
          <path d="M8 0v36M16 0v36M24 0v36M32 0v36M40 0v36M0 12h48M0 24h48" stroke="#444" />
          <path d="M0 35C10 34 12 14 22 12H48" stroke="#5bdcf2" strokeWidth="1.200" /><circle cx="22" cy="26" r="3.500" stroke="#ffad1f" strokeWidth="1.400" />
        </svg>
        <div className="flex gap-0.5"><Num label="Cut frequency" value="726 Hz" fill={35} className="w-7" /><Num label="Cut width" value="2.45" fill={40} className="flex-1" /></div>
        <div className="mt-0.5 w-7"><Knob label="Predelay" value="2.50 ms" v={0.25} /></div>
      </div>
    </Device>
  );
}

/* ---------- bottom ---------- */

function StatusBar() {
  return (
    <div className="flex h-[23px] items-start gap-1 pl-[5px] pr-[5px]">
      <svg viewBox="0 0 12 12" className="mt-1.5 size-3"><circle cx="6" cy="6" r="5.500" fill="#444" /><path d="M4 3v6l5.500-3z" fill="#a5a5a5" /></svg>
      <div className="mt-[5px] h-[13px] flex-1 border-2 border-[#505050] bg-[#8f8f8f]" />
      <div className="mt-[5px] flex h-[13px] w-[125px] items-center border-2 border-[#505050] bg-[#8f8f8f] px-px"><i className="h-1 w-[70px] bg-[repeating-linear-gradient(to_right,#10202c_0_7px,#506878_7px_8px)]" /></div>
      <div className="flex h-5 items-center gap-0.5 rounded-b-sm bg-[#4d4d4d] px-0.5 pt-1 text-[#0c0c0c]">
        Bass Single
        <span className="flex h-2.5 w-[107px] items-center gap-px bg-[#808080]">
          <i className="h-2 w-1.5 bg-[#999]" />
          <span className="flex h-full w-[76px] items-center gap-px border border-black"><i className="h-2 w-3 bg-[#333]" /><i className="h-2 w-2 bg-[#aaa]" /><i className="h-1.5 w-4 bg-[#222]" /><i className="h-2 w-[9px] bg-[#aaa]" /><i className="h-2 w-1 bg-[#222]" /><i className="h-1.5 w-4 border-y border-[#b08a2a] bg-[#333]" /></span>
          <i className="h-[3px] w-2 bg-[#333]" /><i className="h-[3px] w-2 bg-[#333]" />
        </span>
      </div>
      <svg viewBox="0 0 12 12" className="mt-1.5 size-3"><circle cx="6" cy="6" r="5.500" fill="#444" /><path d="M6 2.500l3 6H3z" fill="#a5a5a5" /></svg>
    </div>
  );
}

const apps: [string, boolean, ReactNode][] = [
  ["Cortana", false, <circle cx="8" cy="8" r="5" fill="none" stroke="#111" strokeWidth="1.800" />],
  ["Task View", false, <path d="M3 5h7v6H3zM3 2v1.500h7V2M3 14v-1.500h7V14M13 2v4M13 8v6" fill="none" stroke="#222" />],
  ["Explorer", true, <><path d="M0 2h6l1 2h9v10H0z" fill="#f5c445" /><path d="M3 8h10v7h-3v-4H6v4H3z" fill="#3f97d8" /></>],
  ["Camtasia", true, <><rect width="16" height="16" rx="2" fill="#f0493a" /><path d="M12 5V4H4v8h8v-1" fill="none" stroke="#fff" strokeWidth="2" /></>],
  ["Brave", true, <><path d="M3 1h9l3 4-2 7-5 4-5-4L1 5z" fill="#f4502a" /><path d="M4 5h8l-2 3 1 2-3 3-3-3 1-2z" fill="#fff" /><circle cx="12" cy="12" r="4" fill="#8a4fd8" /></>],
  ["Opera", false, <><ellipse cx="8" cy="8" rx="7" ry="7.500" fill="none" stroke="#e2435f" strokeWidth="1.500" /><ellipse cx="8" cy="8" rx="3" ry="6" fill="none" stroke="#e2435f" strokeWidth="1.200" /></>],
  ["Splice", true, <><circle cx="8" cy="8" r="8" fill="#fff" /><path d="M9.500 4L6 7.500l3 1L6.500 12" fill="none" stroke="#111" strokeWidth="2" /></>],
  ["Discord", true, <><rect width="15" height="14" rx="3" fill="#6577c9" /><path d="M3 4h8v5H3z" fill="#fff" /><circle cx="5.500" cy="6.500" r="1" fill="#6577c9" /><circle cx="9" cy="6.500" r="1" fill="#6577c9" /><circle cx="12" cy="12" r="4" fill="#e94747" /><circle cx="12" cy="12" r="1.500" fill="#fff" /></>],
  ["Spotify", true, <><circle cx="8" cy="8" r="8" fill="#1ed760" /><path d="M3.500 5.500q5-1.500 9.500 1M4 8.500q4-1 8 1M4.500 11q3.500-1 6.500 1" fill="none" stroke="#111" strokeWidth="1.400" /></>],
];

function Taskbar() {
  return (
    <footer className="flex h-6 bg-[#dbe3e7] font-['Open_Sans',sans-serif] font-normal text-[#222]">
      <button aria-label="Start" className="flex w-[29px] items-center justify-center"><svg viewBox="0 0 10 10" className="size-2.5"><path d="M0 1.500l4.500-.7v4H0zM5 .7L10 0v4.800H5zM0 5.300h4.500v4L0 8.700zM5 5.300h5V10l-5-.7z" /></svg></button>
      <label className="flex w-[205px] items-center gap-[7px] bg-white pl-1.5">
        <svg viewBox="0 0 10 10" className="size-[11px]" fill="none" stroke="#222" strokeWidth=".9"><circle cx="6" cy="4" r="3.200" /><path d="M3.700 6.300L.8 9.500" /></svg>
        <input aria-label="Windows search" placeholder="Type here to search" className="min-w-0 flex-1 text-[9px] placeholder:text-[#444]" />
      </label>
      <div className="grid grid-cols-[repeat(9,29px)_28px] gap-x-px">
        {apps.map(([name, open, icon]) => (
          <button key={name} aria-label={name} className="flex flex-col items-center justify-between pt-1">
            <svg viewBox="0 0 16 16" className={name === "Task View" || name === "Cortana" ? "size-4" : "size-3.5"}>{icon}</svg>
            {open && <i className="h-0.5 w-6 bg-[#1d78cf]" />}
          </button>
        ))}
        <button className="flex flex-col items-center justify-between bg-[#f3f7f9] pt-1.5"><span className="h-3 w-3 bg-[#151515] text-[5px] font-bold leading-[12px] text-white">Live</span><i className="h-0.5 w-full bg-[#1d78cf]" /></button>
      </div>
      <div className="ml-auto flex items-center gap-1.5 pr-2.5">
        <svg viewBox="0 0 8 8" className="size-2" fill="none" stroke="#222"><path d="M1 6l3-3.500L7 6" /></svg>
        <svg viewBox="0 0 8 12" className="h-2.5 w-2"><path d="M2 0h4v6H2z" /><path d="M1 5v2h6V5M4 7v4M2 11h4" stroke="#111" fill="none" /></svg>
        <svg viewBox="0 0 10 10" className="size-2.5" fill="none" stroke="#333" strokeWidth=".9"><path d="M1 9a8 8 0 0 1 8-8M3.500 9A5.500 5.500 0 0 1 9 3.500M6 9a3 3 0 0 1 3-3M8 9h1" /></svg>
        <svg viewBox="0 0 10 10" className="size-2.5" fill="none" stroke="#222" strokeWidth=".9"><path d="M0 3.500h2L4.500 1v8L2 6.500H0zM6 3.500q1 1.500 0 3M7.500 2.500q2 2.500 0 5M9 1.500q2 3.500 0 7" /></svg>
        <div className="text-center text-[7px] leading-[11px]">4:57 PM<br />15/04/2021</div>
        <svg viewBox="0 0 14 14" className="ml-1 size-3.5"><path d="M0 0h11v9H4l-2 2V9H0z" fill="#222" /><circle cx="9" cy="9" r="4.500" fill="#dbe3e7" stroke="#555" strokeWidth=".7" /><text x="9" y="11.500" fontSize="7" textAnchor="middle">1</text></svg>
      </div>
    </footer>
  );
}

export default function App() {
  return (
    <div className="flex min-h-screen bg-black px-16 font-[Inter,sans-serif] text-[6px] font-medium leading-[8px] text-[#161616]">
      <main className="flex min-w-0 flex-1 flex-col bg-[#6f6f6f]">
        <TitleBar />
        <Transport />
        <div className="flex flex-1 gap-[5px] pl-[5px] pr-[5px]">
          <div className="flex w-[246px] shrink-0 flex-col"><Browser /><Grooves /></div>
          <Arrangement />
        </div>
        <div className="mx-[5px] mt-[5px] flex h-[117px] rounded-sm border-2 border-[#4a4a4a] bg-[#4a4a4a]">
          <Operator /><Level /><EqEight /><Level /><DrumBuss /><Level /><Phaser /><Level /><Reverb />
        </div>
        <StatusBar />
        <Taskbar />
      </main>
    </div>
  );
}
